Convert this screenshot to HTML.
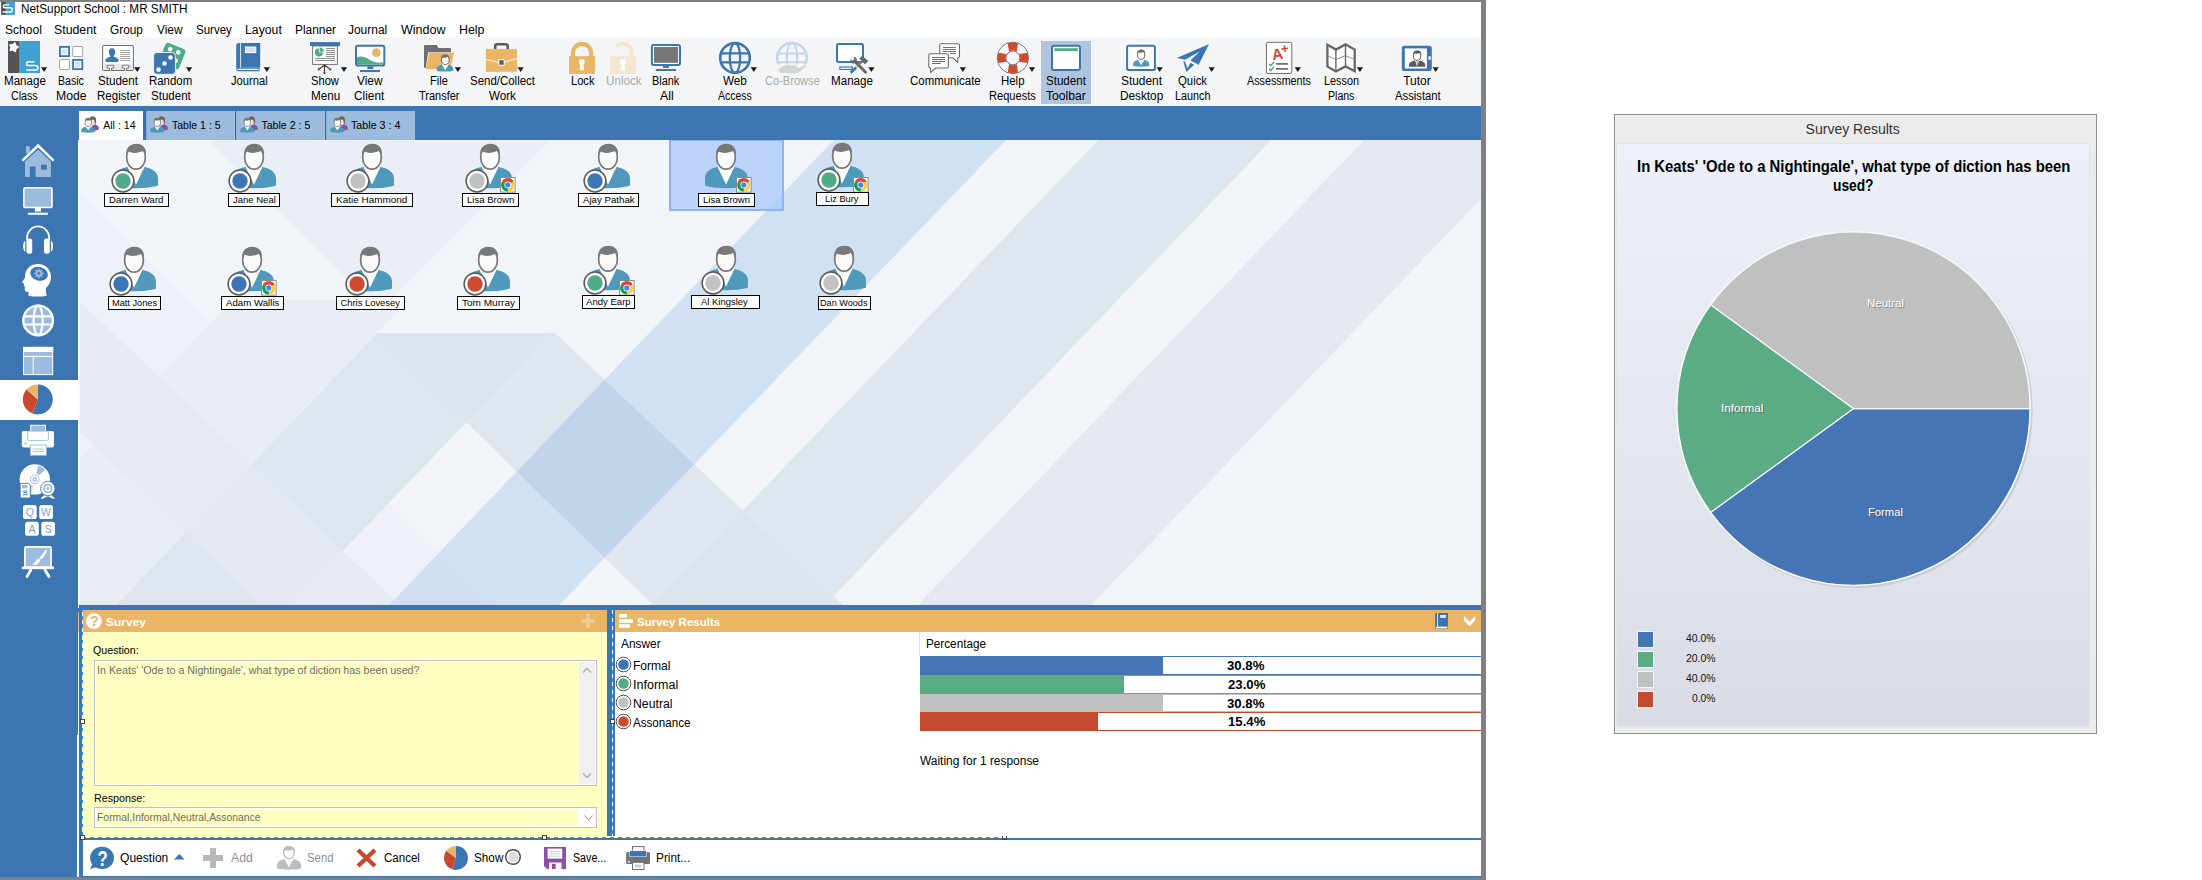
<!DOCTYPE html>
<html><head><meta charset="utf-8"><title>NetSupport School : MR SMITH</title>
<style>
html,body{margin:0;padding:0;background:#fff;}
body{width:2202px;height:880px;position:relative;overflow:hidden;font-family:"Liberation Sans", sans-serif;}
.a{position:absolute;}
.t{position:absolute;white-space:nowrap;transform-origin:0 50%;}
svg{position:absolute;overflow:visible;}

.blue{background:#3c76b2;}

</style></head><body>
<div class="a" style="left:0px;top:0px;width:1486px;height:880px;background:#808080;"></div>
<div class="a" style="left:0px;top:2px;width:1481px;height:36px;background:#ffffff;"></div>
<div class="a" style="left:0px;top:38px;width:1481px;height:68px;background:#f4f5f7;"></div>
<div class="a" style="left:0px;top:106px;width:1481px;height:34px;background:#3c76b2;"></div>
<div class="a" style="left:0px;top:140px;width:78px;height:737px;background:#3c76b2;"></div>
<div class="a" style="left:78px;top:605px;width:1403px;height:272px;background:#ffffff;"></div>
<div class="a" style="left:1041px;top:41px;width:50px;height:63px;background:#afc5df;"></div>
<div class="a" style="left:78.5px;top:110.5px;width:64.9px;height:29.5px;background:#ffffff;"></div>
<div class="a" style="left:145px;top:110.5px;width:1px;height:29.5px;background:#2f6aaa;"></div>
<div class="a" style="left:146px;top:110.5px;width:88.6px;height:29.5px;background:#9dbbdc;box-shadow:inset 1px 0 0 #8fb1d8, inset -1px 0 0 #a8c3e0;"></div>
<div class="a" style="left:235.4px;top:110.5px;width:1px;height:29.5px;background:#2f6aaa;"></div>
<div class="a" style="left:236.4px;top:110.5px;width:88.2px;height:29.5px;background:#9dbbdc;box-shadow:inset 1px 0 0 #8fb1d8, inset -1px 0 0 #a8c3e0;"></div>
<div class="a" style="left:325.4px;top:110.5px;width:1px;height:29.5px;background:#2f6aaa;"></div>
<div class="a" style="left:326.4px;top:110.5px;width:88.2px;height:29.5px;background:#9dbbdc;box-shadow:inset 1px 0 0 #8fb1d8, inset -1px 0 0 #a8c3e0;"></div>
<svg style="left:0;top:0" width="1481" height="106" viewBox="0 0 1481 106"><path d="M41 67.2 h6.2 l-3.1 4.9z" fill="#1a1a1a"/><path d="M134.1 67.2 h6.2 l-3.1 4.9z" fill="#1a1a1a"/><path d="M186 67.2 h6.2 l-3.1 4.9z" fill="#1a1a1a"/><path d="M263.7 67.2 h6.2 l-3.1 4.9z" fill="#1a1a1a"/><path d="M340.9 67.2 h6.2 l-3.1 4.9z" fill="#1a1a1a"/><path d="M454.8 67.2 h6.2 l-3.1 4.9z" fill="#1a1a1a"/><path d="M517.5 67.2 h6.2 l-3.1 4.9z" fill="#1a1a1a"/><path d="M750.7 67.2 h6.2 l-3.1 4.9z" fill="#1a1a1a"/><path d="M868.3 67.2 h6.2 l-3.1 4.9z" fill="#1a1a1a"/><path d="M959.7 67.2 h6.2 l-3.1 4.9z" fill="#1a1a1a"/><path d="M1028.9 67.2 h6.2 l-3.1 4.9z" fill="#1a1a1a"/><path d="M1156.6 67.2 h6.2 l-3.1 4.9z" fill="#1a1a1a"/><path d="M1208.6 67.2 h6.2 l-3.1 4.9z" fill="#1a1a1a"/><path d="M1294.7 67.2 h6.2 l-3.1 4.9z" fill="#1a1a1a"/><path d="M1356.8 67.2 h6.2 l-3.1 4.9z" fill="#1a1a1a"/><path d="M1432.6 67.2 h6.2 l-3.1 4.9z" fill="#1a1a1a"/><rect x="8" y="41" width="11.7" height="32" fill="#555353"/><rect x="19.6" y="41" width="20.4" height="32" fill="#41a0d4"/><polygon points="14.84,42.74 15.77,45.56 18.39,46.97 15.99,48.73 15.46,51.66 13.05,49.92 10.10,50.32 11.01,47.49 9.71,44.81 12.69,44.80" fill="#fff" stroke="#fff" stroke-width="1.2" stroke-linejoin="round"/><path d="M34 61.8 H28.4 A1.85 1.85 0 0 0 28.4 65.5 H35.6 A2.3 2.3 0 0 1 35.6 70.1 H26.8" fill="none" stroke="#fff" stroke-width="1.5" stroke-linecap="round"/><rect x="59.9" y="46.9" width="9.2" height="9.2" fill="#fff" stroke="#3c76b2" stroke-width="1.8"/><rect x="61.7" y="48.7" width="5.6" height="5.6" fill="#c9e4fb"/><rect x="72.7" y="46.5" width="10" height="10" rx="0.8" fill="#fff" stroke="#a3a3a3" stroke-width="1"/><rect x="59.5" y="59.5" width="10" height="10" rx="0.8" fill="#fff" stroke="#a3a3a3" stroke-width="1"/><rect x="73.1" y="59.9" width="9.2" height="9.2" fill="#fff" stroke="#3c76b2" stroke-width="1.8"/><rect x="74.9" y="61.7" width="5.6" height="5.6" fill="#c9e4fb"/><rect x="102.6" y="45.5" width="30.8" height="24.9" rx="1.7" fill="#fff" stroke="#6e6e6e" stroke-width="1.05"/><rect x="103.2" y="64.2" width="29.6" height="5.7" fill="#e6e6e6"/><path d="M109.4 70.5 V68 H107.1 V65.3 H113.7 V68 H111.6 V70.5 M124.6 70.5 V68 H122.3 V65.3 H128.8 V68 H126.6 V70.5" fill="#fff" stroke="#6e6e6e" stroke-width="0.95"/><path d="M112 48.2 C114.2 48.2 115.4 49.8 115.2 52 C115.1 54 114.4 55.2 113.6 56 C113.6 56.6 114 57 115 57.3 C117.4 58 118.6 58.8 118.7 60.6 C118.7 61.4 118.2 61.8 117 61.9 H107 C105.8 61.8 105.3 61.4 105.3 60.6 C105.4 58.8 106.6 58 109 57.3 C110 57 110.4 56.6 110.4 56 C109.6 55.2 108.9 54 108.8 52 C108.6 49.8 109.8 48.2 112 48.2Z" fill="#3c76b2"/><rect x="120" y="49.95" width="10" height="0.9" fill="#9a9a9a"/><rect x="120" y="52.05" width="10" height="0.9" fill="#9a9a9a"/><rect x="120" y="54.05" width="10" height="0.9" fill="#9a9a9a"/><rect x="120" y="56.05" width="10" height="0.9" fill="#9a9a9a"/><rect x="120" y="58.05" width="10" height="0.9" fill="#9a9a9a"/><rect x="120" y="60.05" width="10" height="0.9" fill="#9a9a9a"/><g transform="translate(166.4 42) rotate(22)"><rect x="0" y="0" width="21.5" height="21.5" rx="3" fill="#4fac86"/><circle cx="6.2" cy="5.2" r="2.3" fill="#fff"/><circle cx="14.9" cy="5.2" r="2.3" fill="#fff"/><circle cx="15.6" cy="13.9" r="2.3" fill="#fff"/></g><rect x="153.6" y="52.5" width="21.8" height="21.8" rx="3.2" fill="#3c76b2" stroke="#f4f5f7" stroke-width="0.9"/><circle cx="170.5" cy="57.5" r="2.3" fill="#fff"/><circle cx="164.5" cy="63.5" r="2.3" fill="#fff"/><circle cx="158.5" cy="69.6" r="2.3" fill="#fff"/><path d="M238.6 43 H260.2 V67.8 H238 Z" fill="#3c76b2"/><path d="M236.2 45.6 C236.2 44 237.4 43 239 43 H240.2 V67.8 H238.4 C237.2 67.8 236.2 68.6 236.2 69.6Z" fill="#3c76b2"/><rect x="240.2" y="43" width="0.9" height="24.8" fill="#f4f5f7"/><path d="M236.8 69.6 C236.8 68.8 237.6 68.2 238.6 68.2 H259 V70.6 H238 C237.2 70.6 236.8 70.2 236.8 69.6Z" fill="#fff" stroke="#3c76b2" stroke-width="1.1"/><rect x="245.4" y="47" width="10.4" height="5.6" fill="#d6e2ef" stroke="#fff" stroke-width="1"/><rect x="310" y="42.1" width="30" height="3.9" fill="#3c76b2"/><rect x="312.65" y="46" width="24.7" height="18.4" fill="#fff" stroke="#6e6e6e" stroke-width="0.95"/><path d="M318.9 52.6 V48.5 A4.1 4.1 0 1 0 323 52.6Z" fill="#4fac86"/><path d="M319.6 51.7 V47.4 A4.3 4.3 0 0 1 323.9 51.7Z" fill="#4fac86"/><rect x="326.1" y="48.05" width="8.9" height="0.9" fill="#808080"/><rect x="326.1" y="50.05" width="8.9" height="0.9" fill="#808080"/><rect x="326.1" y="52.05" width="8.9" height="0.9" fill="#808080"/><rect x="326.1" y="54.05" width="8.9" height="0.9" fill="#808080"/><rect x="326.1" y="56.05" width="8.9" height="0.9" fill="#808080"/><rect x="315.1" y="58.05" width="19.9" height="0.9" fill="#808080"/><rect x="315.1" y="60.05" width="19.9" height="0.9" fill="#808080"/><path d="M324.5 64.8 V72.8 M324.5 65 L318.8 69.2 M324.5 65 L330.2 69.2" stroke="#444" stroke-width="1.15" fill="none" stroke-linecap="round"/><circle cx="318.6" cy="69.4" r="1" fill="#444"/><circle cx="330.4" cy="69.4" r="1" fill="#444"/><circle cx="324.5" cy="72.8" r="1.1" fill="#444"/><rect x="356" y="45.8" width="28.3" height="19.8" rx="1.8" fill="#fff" stroke="#3c76b2" stroke-width="2"/><circle cx="376.4" cy="52.6" r="4.4" fill="#ebb566"/><path d="M357 57.4 C361 55.6 365 56.8 369 59.4 C373 62 378 63.4 383.3 62.2 V64.6 H357Z" fill="#4fac86"/><rect x="367.3" y="66.4" width="5.9" height="2.6" fill="#3c76b2"/><rect x="360" y="70" width="20" height="2.1" fill="#3c76b2"/><path d="M424 46.1 Q424 45.1 425 45.1 H436.8 L438.4 48.1 H450 Q451 48.1 451 49.1 V52.2 H428.1 L425.8 67.7 H424Z" fill="#6e6e6e"/><path d="M428.9 52.8 H454 L450.4 69 H425.9Z" fill="#ebb566"/><path d="M436.8 71 V68.6 C437 66 439.6 65.2 441.8 64.4 L445.2 69.6 L448.6 64.4 C450.8 65.2 452.9 66 453.1 68.6 V71 C448 71.8 442 71.8 436.8 71Z" fill="#4f9abc"/><path d="M441.8 64.2 L445.2 70 L448.6 64.2 L446.6 62.6 H443.8Z" fill="#fff"/><ellipse cx="445.3" cy="60" rx="3.9" ry="4.6" fill="#fafafa" stroke="#6e6e6e" stroke-width="1"/><path d="M441.2 59.4 C440.7 55.8 442.8 54.6 445.4 54.6 C448 54.6 450 56.2 449.4 59.2 C448.8 57.7 448.1 57.3 447.6 57.1 C445.8 58 443.5 58 442.4 57.3 C441.7 57.7 441.4 58.5 441.2 59.4Z" fill="#6e6e6e"/><path d="M495.2 49.2 V46.2 C495.2 44.9 496 44.3 497.2 44.3 H505.7 C506.9 44.3 507.7 44.9 507.7 46.2 V49.2" fill="none" stroke="#5c5c5c" stroke-width="2.6"/><rect x="485.8" y="48.9" width="31.2" height="22.9" fill="#ebb566"/><path d="M485.8 59.2 L501.5 63 L517 58.4" fill="none" stroke="#fbf0de" stroke-width="1.1"/><rect x="498.7" y="59.7" width="5.5" height="5.5" rx="0.6" fill="#5c5c5c" stroke="#fff" stroke-width="1.1"/><rect x="569" y="56.2" width="26" height="17.7" fill="#ebb566"/><path d="M572.95 57 V52.9 A9.05 9.05 0 0 1 591.05 52.9 V57" fill="none" stroke="#ebb566" stroke-width="4.1"/><circle cx="581.8" cy="61.9" r="2.95" fill="#fff"/><path d="M580.5 63 L579.5 70.2 H584.2 L583.1 63Z" fill="#fff"/><rect x="610" y="56.2" width="26" height="17.7" fill="#f5e6d0"/><path d="M615.97 46.84 A9.05 9.05 0 0 1 631.75 52.9 V57" fill="none" stroke="#f5e6d0" stroke-width="4.1"/><circle cx="622.8" cy="61.9" r="2.95" fill="#fff"/><path d="M621.5 63 L620.5 70.2 H625.2 L624.1 63Z" fill="#fff"/><rect x="651.9" y="44.9" width="28.1" height="20.1" rx="2" fill="#fff" stroke="#3c76b2" stroke-width="2"/><rect x="654" y="47" width="24.1" height="15.8" fill="#777"/><rect x="663" y="65.8" width="5.9" height="2.1" fill="#3c76b2"/><rect x="655.9" y="69" width="20.1" height="2" fill="#3c76b2"/><g fill="none" stroke="#3c76b2"><circle cx="735" cy="57.9" r="14.8" stroke-width="2.6"/><ellipse cx="735" cy="57.9" rx="5.2325" ry="14.8" stroke-width="2.2"/><path d="M720.888 53.4403 H749.112 M720.888 62.3597 H749.112" stroke-width="2.2"/></g><g><clipPath id="cbg"><rect x="770" y="40" width="44" height="24.2"/></clipPath><g clip-path="url(#cbg)"><g fill="none" stroke="#c3d5ea"><circle cx="792" cy="57.9" r="14.9" stroke-width="2.4"/><ellipse cx="792" cy="57.9" rx="5.2325" ry="14.9" stroke-width="2"/><path d="M777.783 53.4403 H806.217 M777.783 62.3597 H806.217" stroke-width="2"/></g></g></g><path d="M778.2 69.4 C781 66.6 785 65 789.4 65.2 L796 65.8 C798 66 798.2 67.8 796.4 68 L791 68.2 L799.4 68 L804.4 65 C805.8 64.2 807 65.2 805.8 66.4 L799.6 72 C797.8 73.2 796 73.5 793 73.4 L785 72.8 L780.6 73.4 Z" fill="#d5d5d5"/><rect x="837" y="44" width="26" height="18.1" rx="1.4" fill="#fff" stroke="#3c76b2" stroke-width="2"/><rect x="839.9" y="67" width="12.4" height="2.4" fill="#fff" stroke="#3c76b2" stroke-width="1.2"/><path d="M850.6 72.8 L856.2 67.4" stroke="#3c76b2" stroke-width="2.8" fill="none"/><path d="M854 60.6 L865.6 72.2" stroke="#666" stroke-width="2.8" fill="none" stroke-linecap="round"/><circle cx="853.6" cy="60.2" r="3.3" fill="#666"/><path d="M849.6 58.8 L852.8 55.6 L854.6 59.2 L852 60.8Z" fill="#f4f5f7"/><path d="M857 66.6 L861.6 61.8" stroke="#777" stroke-width="1.8" fill="none"/><path d="M859.2 58.6 L862.2 55.8 L868.2 61 L865 64.2 Z" fill="#666"/><path d="M941.2 43.7 H958 Q959.5 43.7 959.5 45.2 V56.3 Q959.5 57.8 958 57.8 H957.9 L957.6 62.4 L952.9 57.8 H941.2 Q939.7 57.8 939.7 56.3 V45.2 Q939.7 43.7 941.2 43.7Z" fill="#fff" stroke="#6a6a6a" stroke-width="1.05"/><rect x="943" y="47" width="13" height="1" fill="#d9503a"/><rect x="943" y="49" width="13" height="1" fill="#d9503a"/><rect x="943" y="51" width="13" height="1" fill="#d9503a"/><rect x="950" y="53" width="6" height="1" fill="#d9503a"/><path d="M930.3 53.8 H946.9 Q948.4 53.8 948.4 55.3 V66.5 Q948.4 68 946.9 68 H935.6 L930.6 72.4 L930.5 68 H930.3 Q928.8 68 928.8 66.5 V55.3 Q928.8 53.8 930.3 53.8Z" fill="#fff" stroke="#6a6a6a" stroke-width="1.05"/><rect x="932" y="57" width="13" height="1" fill="#3c76b2"/><rect x="932" y="59" width="13" height="1" fill="#3c76b2"/><rect x="932" y="61" width="13" height="1" fill="#3c76b2"/><rect x="932" y="63" width="8.8" height="1" fill="#3c76b2"/><circle cx="1012.9" cy="57.9" r="15.7" fill="#fff" stroke="#555" stroke-width="0.8"/><path d="M1027.42 52.76 A15.7 15.7 0 0 1 1027.42 63.04 L1019.01 61.72 A6.9 6.9 0 0 0 1019.01 54.08 Z" fill="#d04a31"/><path d="M1018.04 72.42 A15.7 15.7 0 0 1 1007.76 72.42 L1009.08 64.01 A6.9 6.9 0 0 0 1016.72 64.01 Z" fill="#d04a31"/><path d="M998.38 63.04 A15.7 15.7 0 0 1 998.38 52.76 L1006.79 54.08 A6.9 6.9 0 0 0 1006.79 61.72 Z" fill="#d04a31"/><path d="M1007.76 43.38 A15.7 15.7 0 0 1 1018.04 43.38 L1016.72 51.79 A6.9 6.9 0 0 0 1009.08 51.79 Z" fill="#d04a31"/><circle cx="1012.9" cy="57.9" r="6.9" fill="#f4f5f7" stroke="#555" stroke-width="0.8"/><rect x="1052" y="45.8" width="28" height="24.2" rx="2" fill="#fff" stroke="#3c76b2" stroke-width="2"/><rect x="1054.4" y="48.2" width="23.4" height="2.8" fill="#4fac86"/><rect x="1127.1" y="45.8" width="27.8" height="24.2" rx="1.8" fill="#fff" stroke="#3c76b2" stroke-width="2"/><path d="M1133.2 66 V64 C1133.4 61.4 1136 60.6 1138 59.8 L1141.2 64.8 L1144.4 59.8 C1146.4 60.6 1149 61.4 1149.2 64 V66 C1144 67 1138 67 1133.2 66Z" fill="#4f9abc"/><path d="M1138.2 59.6 L1141.2 65.2 L1144.2 59.6 L1142.6 58.4 H1139.8Z" fill="#fff"/><ellipse cx="1141.1" cy="55" rx="3.6" ry="4.4" fill="#fafafa" stroke="#6e6e6e" stroke-width="1"/><path d="M1137.2 54.4 C1136.8 50.8 1138.8 49.6 1141.3 49.6 C1143.9 49.6 1145.7 51.2 1145.1 54.2 C1144.5 52.7 1143.9 52.3 1143.4 52.1 C1141.7 53 1139.5 53 1138.4 52.3 C1137.7 52.7 1137.4 53.5 1137.2 54.4Z" fill="#6e6e6e"/><path d="M1176.8 58 L1209.1 43.9 L1200 51.2 L1185 59.8Z" fill="#3c76b2"/><path d="M1209.1 43.9 L1198.6 64.8 L1190.5 60.5 L1200.4 50.6Z" fill="#3c76b2"/><path d="M1183.2 61.2 L1186.4 71.9 L1194.1 64.8 L1190.5 62.8 L1187.5 68.2 L1184.8 61.2Z" fill="#3c76b2"/><rect x="1266.4" y="42.3" width="25.4" height="31.2" rx="1.6" fill="#fff" stroke="#6e6e6e" stroke-width="1"/><text transform="rotate(-9 1278 54)" x="1271.8" y="59.4" font-family='"Liberation Sans",sans-serif' font-weight="bold" font-size="15.4" fill="#d04a31">A</text><text transform="rotate(-9 1285 48)" x="1280.6" y="53" font-family='"Liberation Sans",sans-serif' font-weight="bold" font-size="13.5" fill="#d04a31">+</text><rect x="1276" y="63.05" width="12" height="1.7" fill="#6e6e6e"/><path d="M1269 63.9 L1270.8 65.5 L1274 61.9" fill="none" stroke="#3cab7c" stroke-width="1.3"/><rect x="1276" y="68.05" width="12" height="1.7" fill="#6e6e6e"/><path d="M1269 68.9 L1270.8 70.5 L1274 66.9" fill="none" stroke="#3cab7c" stroke-width="1.3"/><path d="M1327.4 44.8 L1335.9 49.6 L1345.5 44.4 L1354.7 49.6 V71.2 L1345.5 66.4 L1335.9 71.4 L1327.4 66.4Z" fill="#fff" stroke="#666" stroke-width="2.3" stroke-linejoin="miter"/><path d="M1335.9 49.6 V71.4 M1345.5 44.4 V66.4" stroke="#666" stroke-width="1.4" fill="none"/><path d="M1327.4 55.6 L1335.9 59.6 L1345.5 55.6 L1354.7 59.6" stroke="#858585" stroke-width="0.9" fill="none"/><rect x="1401.8" y="45.8" width="30" height="25.2" rx="2.6" fill="#3c76b2"/><rect x="1404.8" y="48.4" width="22.1" height="20.1" fill="#fff"/><ellipse cx="1429.6" cy="58" rx="1.3" ry="2" fill="#fff"/><path d="M1409 66.8 V64.6 C1409.3 62 1412 61.2 1414.2 60.4 L1417.1 62.4 L1420 60.4 C1422.2 61.2 1425 62 1425.2 64.6 V66.8Z" fill="#5a5a5a"/><path d="M1415.2 60.2 L1417.1 66.6 L1419 60.2Z" fill="#fff"/><path d="M1416.4 61.2 L1417.1 66.6 L1417.8 61.2Z" fill="#e8733a"/><ellipse cx="1417.1" cy="55.9" rx="3.7" ry="4.5" fill="#fafafa" stroke="#5a5a5a" stroke-width="1"/><path d="M1413.1 55.3 C1412.6 51.8 1414.8 50.6 1417.3 50.6 C1419.9 50.6 1421.8 52.2 1421.2 55.1 C1420.6 53.6 1419.9 53.2 1419.5 53 C1417.8 53.9 1415.4 53.9 1414.3 53.2 C1413.6 53.6 1413.3 54.4 1413.1 55.3Z" fill="#5a5a5a"/></svg>
<svg style="left:0;top:0" width="20" height="18" viewBox="0 0 20 18"><rect x="1.1" y="2" width="4.8" height="12.9" fill="#555353"/><rect x="5.9" y="2" width="9" height="12.9" fill="#41a0d4"/><path d="M8.6 4.9 H4.7 A1.4 1.4 0 0 0 4.7 7.7 H10.2 A2.15 2.15 0 0 1 10.2 12 H3.2" fill="none" stroke="#fff" stroke-width="1.4" stroke-linecap="round"/></svg>
<svg style="left:81px;top:116px" width="19" height="18" viewBox="0 0 19 18"><path d="M11 14.2 V10 L13.4 8.6 C15.8 9 17.6 10 17.8 11.8 V13.4 C16.4 14.2 13 14.4 11 14.2Z" fill="#8c4fa8"/><ellipse cx="11.6" cy="5" rx="2.9" ry="3.8" fill="#f1e2d4"/><path d="M8.4 5.4 C8 2 9.6 0.3 11.8 0.3 C14.4 0.3 15.4 2.4 15 5.6 C14.9 7.6 14.6 8.6 14 9.4 C14 7 13.6 4.6 12.6 3.4 C11 3.8 9.4 4.4 8.4 5.4Z" fill="#6e625e"/><path d="M0.2 16 V14 C0.5 12 2.6 11.4 4.6 10.8 L7.3 13.6 L10 10.8 C12 11.4 13.9 12 14.2 14 V16 C9.6 16.9 4.6 16.9 0.2 16Z" fill="#4f9abc"/><path d="M4.8 10.6 L7.3 14.4 L9.8 10.6 L8.4 9.4 H6.2Z" fill="#fff"/><ellipse cx="7.3" cy="6.6" rx="3.2" ry="4.1" fill="#fafafa" stroke="#777" stroke-width="0.8"/><path d="M3.9 6.2 C3.5 2.9 5.2 1.8 7.4 1.8 C9.6 1.8 11.2 3.2 10.7 6 C10.2 4.7 9.6 4.3 9.2 4.1 C7.8 4.9 5.9 4.9 5 4.3 C4.4 4.7 4.1 5.4 3.9 6.2Z" fill="#777"/></svg>
<svg style="left:149.8px;top:116px" width="19" height="18" viewBox="0 0 19 18"><path d="M11 14.2 V10 L13.4 8.6 C15.8 9 17.6 10 17.8 11.8 V13.4 C16.4 14.2 13 14.4 11 14.2Z" fill="#8c4fa8"/><ellipse cx="11.6" cy="5" rx="2.9" ry="3.8" fill="#f1e2d4"/><path d="M8.4 5.4 C8 2 9.6 0.3 11.8 0.3 C14.4 0.3 15.4 2.4 15 5.6 C14.9 7.6 14.6 8.6 14 9.4 C14 7 13.6 4.6 12.6 3.4 C11 3.8 9.4 4.4 8.4 5.4Z" fill="#6e625e"/><path d="M0.2 16 V14 C0.5 12 2.6 11.4 4.6 10.8 L7.3 13.6 L10 10.8 C12 11.4 13.9 12 14.2 14 V16 C9.6 16.9 4.6 16.9 0.2 16Z" fill="#4f9abc"/><path d="M4.8 10.6 L7.3 14.4 L9.8 10.6 L8.4 9.4 H6.2Z" fill="#fff"/><ellipse cx="7.3" cy="6.6" rx="3.2" ry="4.1" fill="#fafafa" stroke="#777" stroke-width="0.8"/><path d="M3.9 6.2 C3.5 2.9 5.2 1.8 7.4 1.8 C9.6 1.8 11.2 3.2 10.7 6 C10.2 4.7 9.6 4.3 9.2 4.1 C7.8 4.9 5.9 4.9 5 4.3 C4.4 4.7 4.1 5.4 3.9 6.2Z" fill="#777"/></svg>
<svg style="left:240px;top:116px" width="19" height="18" viewBox="0 0 19 18"><path d="M11 14.2 V10 L13.4 8.6 C15.8 9 17.6 10 17.8 11.8 V13.4 C16.4 14.2 13 14.4 11 14.2Z" fill="#8c4fa8"/><ellipse cx="11.6" cy="5" rx="2.9" ry="3.8" fill="#f1e2d4"/><path d="M8.4 5.4 C8 2 9.6 0.3 11.8 0.3 C14.4 0.3 15.4 2.4 15 5.6 C14.9 7.6 14.6 8.6 14 9.4 C14 7 13.6 4.6 12.6 3.4 C11 3.8 9.4 4.4 8.4 5.4Z" fill="#6e625e"/><path d="M0.2 16 V14 C0.5 12 2.6 11.4 4.6 10.8 L7.3 13.6 L10 10.8 C12 11.4 13.9 12 14.2 14 V16 C9.6 16.9 4.6 16.9 0.2 16Z" fill="#4f9abc"/><path d="M4.8 10.6 L7.3 14.4 L9.8 10.6 L8.4 9.4 H6.2Z" fill="#fff"/><ellipse cx="7.3" cy="6.6" rx="3.2" ry="4.1" fill="#fafafa" stroke="#777" stroke-width="0.8"/><path d="M3.9 6.2 C3.5 2.9 5.2 1.8 7.4 1.8 C9.6 1.8 11.2 3.2 10.7 6 C10.2 4.7 9.6 4.3 9.2 4.1 C7.8 4.9 5.9 4.9 5 4.3 C4.4 4.7 4.1 5.4 3.9 6.2Z" fill="#777"/></svg>
<svg style="left:330px;top:116px" width="19" height="18" viewBox="0 0 19 18"><path d="M11 14.2 V10 L13.4 8.6 C15.8 9 17.6 10 17.8 11.8 V13.4 C16.4 14.2 13 14.4 11 14.2Z" fill="#8c4fa8"/><ellipse cx="11.6" cy="5" rx="2.9" ry="3.8" fill="#f1e2d4"/><path d="M8.4 5.4 C8 2 9.6 0.3 11.8 0.3 C14.4 0.3 15.4 2.4 15 5.6 C14.9 7.6 14.6 8.6 14 9.4 C14 7 13.6 4.6 12.6 3.4 C11 3.8 9.4 4.4 8.4 5.4Z" fill="#6e625e"/><path d="M0.2 16 V14 C0.5 12 2.6 11.4 4.6 10.8 L7.3 13.6 L10 10.8 C12 11.4 13.9 12 14.2 14 V16 C9.6 16.9 4.6 16.9 0.2 16Z" fill="#4f9abc"/><path d="M4.8 10.6 L7.3 14.4 L9.8 10.6 L8.4 9.4 H6.2Z" fill="#fff"/><ellipse cx="7.3" cy="6.6" rx="3.2" ry="4.1" fill="#fafafa" stroke="#777" stroke-width="0.8"/><path d="M3.9 6.2 C3.5 2.9 5.2 1.8 7.4 1.8 C9.6 1.8 11.2 3.2 10.7 6 C10.2 4.7 9.6 4.3 9.2 4.1 C7.8 4.9 5.9 4.9 5 4.3 C4.4 4.7 4.1 5.4 3.9 6.2Z" fill="#777"/></svg>
<svg style="left:0;top:0" width="78" height="880" viewBox="0 0 78 880"><rect x="0" y="380" width="78" height="40" fill="#fff"/><rect x="25.9" y="146.2" width="3.9" height="7" fill="#9dbbdc"/><path d="M25 161.6 L38.1 149.6 L50.9 161.6 V177 H25Z" fill="#9dbbdc"/><rect x="29.8" y="166.5" width="5.8" height="10.5" fill="#3c76b2"/><rect x="41" y="164.7" width="5.8" height="5" fill="#3c76b2"/><path d="M22.4 160.6 L38.1 145.6 L53.6 160.6" fill="none" stroke="#fff" stroke-width="2.6" stroke-linejoin="miter"/><rect x="23.8" y="187.7" width="28.2" height="19.8" rx="1.8" fill="#9dbbdc" stroke="#fff" stroke-width="1.6"/><rect x="34.9" y="208" width="6.1" height="3.6" fill="#fff"/><rect x="27.9" y="212.7" width="20.1" height="2.1" fill="#fff"/><path d="M27 240 V238 A11.1 11.6 0 0 1 49.2 238 V240" fill="none" stroke="#fff" stroke-width="1.7"/><rect x="26.4" y="238.4" width="5.8" height="15.4" rx="2.4" fill="#fff"/><path d="M25.2 240.4 C22.4 242 22.4 250 25.2 251.8Z" fill="#fff"/><rect x="44" y="238.4" width="5.8" height="15.4" rx="2.4" fill="#fff"/><path d="M51 240.4 C53.8 242 53.8 250 51 251.8Z" fill="#fff"/><path d="M38 264 C46 264 51 270 51 277 C51 282 48.6 285.4 46 288 C45.6 290.4 46 293.4 46.8 295.4 C42 297 33 297 28.4 295.4 L28.6 291.8 C26.6 292 24.8 291.6 24.8 289.4 L24.8 286.6 L23.6 285.6 L24.4 283.8 L22 282.6 L25 277.4 C24.6 270 29.6 264 38 264Z" fill="#fff"/><ellipse cx="39.1" cy="273.8" rx="9" ry="6.8" transform="rotate(14 39.1 273.8)" fill="#3c76b2"/><g transform="translate(38.9 273.4) scale(1.15)" fill="none" stroke="#9dbbdc"><circle r="2.3" stroke-width="1.4"/><path d="M0 -4.4 V4.4 M-4.4 0 H4.4 M-3.1 -3.1 L3.1 3.1 M-3.1 3.1 L3.1 -3.1" stroke-width="1.1"/></g><circle cx="38.9" cy="273.4" r="1.3" fill="#3c76b2"/><circle cx="38.1" cy="320.4" r="15" fill="#9dbbdc"/><g fill="none" stroke="#fff" stroke-width="2.2"><circle cx="38.1" cy="320.4" r="14.8" stroke-width="2.4"/><ellipse cx="38.1" cy="320.4" rx="4.5" ry="14.8"/><path d="M23.8 316.3 H52.4 M23.8 324.5 H52.4"/></g><rect x="23.5" y="347.4" width="29.2" height="27.2" fill="#9dbbdc" stroke="#fff" stroke-width="1"/><rect x="23" y="346.9" width="30.2" height="5.1" fill="#fff"/><rect x="23" y="355.9" width="30.2" height="1" fill="#fff"/><rect x="32.7" y="356" width="1" height="19" fill="#fff"/><path d="M37.8 399.4 L37.80 384.40 A15 15 0 1 1 32.67 413.50 Z" fill="#3c76b2"/><path d="M37.8 399.4 L32.67 413.50 A15 15 0 0 1 26.48 389.56 Z" fill="#c9482f"/><path d="M37.8 399.4 L26.48 389.56 A15 15 0 0 1 37.80 384.40 Z" fill="#ebb566"/><rect x="30.7" y="425.3" width="14.8" height="8" fill="#9dbbdc" stroke="#fff" stroke-width="1"/><rect x="21.8" y="431" width="32.2" height="16.4" rx="1.8" fill="#fff"/><path d="M27.6 431.2 H48.4 V438.6 Q48.4 440.6 46.4 440.6 H29.6 Q27.6 440.6 27.6 438.6Z" fill="#fff" stroke="#9dbbdc" stroke-width="0.9"/><rect x="30.3" y="445" width="16" height="10.3" fill="#fff" stroke="#9dbbdc" stroke-width="0.9"/><rect x="32.6" y="448.6" width="11.4" height="0.9" fill="#9dbbdc"/><rect x="32.6" y="451.2" width="11.4" height="0.9" fill="#9dbbdc"/><rect x="24.4" y="443" width="2.6" height="1.2" fill="#9dbbdc"/><circle cx="34.8" cy="479.4" r="15.2" fill="#fff"/><path d="M36.35 473.19 L38.28 465.43 A14.4 14.4 0 0 1 45.16 469.40 L39.40 474.95 A6.4 6.4 0 0 0 36.35 473.19 Z" fill="#9dbbdc"/><path d="M33.25 485.61 L31.32 493.37 A14.4 14.4 0 0 1 24.44 489.40 L30.20 483.85 A6.4 6.4 0 0 0 33.25 485.61 Z" fill="#cbdaed"/><circle cx="34.8" cy="479.4" r="4.4" fill="none" stroke="#9dbbdc" stroke-width="1"/><circle cx="34.8" cy="479.4" r="2.4" fill="#9dbbdc"/><rect x="33.9" y="478.5" width="1.8" height="1.8" transform="rotate(45 34.8 479.4)" fill="#fff"/><path d="M20.2 483.4 H28.4 L30.4 485.4 V498 H20.2Z" fill="#fff" stroke="#3c76b2" stroke-width="0.9"/><rect x="22" y="485" width="5.6" height="3.4" fill="#9dbbdc"/><text transform="rotate(-90 26.6 496.6)" x="26.6" y="496.6" font-family='"Liberation Sans",sans-serif' font-size="6" font-weight="bold" fill="#3c76b2">16</text><path d="M40.8 498.3 L45.4 494 H50.2 L54.8 498.3 L53.6 499 L47.8 496.2 L42 499Z" fill="#fff"/><circle cx="47.8" cy="488.5" r="7.2" fill="#fff" stroke="#3c76b2" stroke-width="0.9"/><circle cx="47.8" cy="488.5" r="4.8" fill="#9dbbdc"/><circle cx="47.8" cy="488.5" r="2.9" fill="#fff"/><circle cx="47.8" cy="488.5" r="1.5" fill="#9dbbdc"/><rect x="23" y="505" width="13.7" height="14" rx="2.6" fill="#fff"/><text x="29.85" y="515.8" text-anchor="middle" font-family='"Liberation Sans",sans-serif' font-size="10.5" fill="#7fa5d1">Q</text><rect x="39.2" y="505" width="13.7" height="14" rx="2.6" fill="#fff"/><text x="46.05" y="515.8" text-anchor="middle" font-family='"Liberation Sans",sans-serif' font-size="10.5" fill="#7fa5d1">W</text><rect x="25.1" y="521.8" width="13.7" height="14" rx="2.6" fill="#fff"/><text x="31.95" y="532.6" text-anchor="middle" font-family='"Liberation Sans",sans-serif' font-size="10.5" fill="#7fa5d1">A</text><rect x="41.3" y="521.8" width="13.7" height="14" rx="2.6" fill="#fff"/><text x="48.15" y="532.6" text-anchor="middle" font-family='"Liberation Sans",sans-serif' font-size="10.5" fill="#7fa5d1">S</text><path d="M24.9 567 V548.4 Q24.9 546.8 26.5 546.8 H49.5 Q51.1 546.8 51.1 548.4 V567Z" fill="#9dbbdc" stroke="#fff" stroke-width="1.7"/><rect x="21.8" y="566.6" width="32.2" height="2.6" fill="#fff"/><path d="M30.8 570 L27 576.6 M45 570 L49 576.6" stroke="#fff" stroke-width="2.8" stroke-linecap="round"/><path d="M46.6 549.2 C47.4 552 44.4 557 41 559.6 L39.4 558 C42 554.6 44.6 550.6 46.6 549.2Z" fill="#fff"/><path d="M38.8 558.6 L40.4 560.2 C39.4 563 36 565.4 32.2 565 C35 563.6 35.4 560 38.8 558.6Z" fill="#fff"/></svg>
<svg class="a" style="left:0;top:0" width="1481" height="605" viewBox="0 0 1481 605"><defs><clipPath id="mc"><rect x="78" y="140" width="1403" height="465"/></clipPath></defs><g clip-path="url(#mc)"><rect x="78" y="140" width="1403" height="465" fill="#f1f4f9"/><polygon points="78,190 78,470 300,605 490,605" fill="#eef1f7"/><polygon points="116,605 291,605 552.12,333 377.12,333" fill="#dfe5ef"/><polygon points="-60,605 116,605 408.8,300 232.8,300" fill="#e8edf4"/><polygon points="652,605 825,605 1271.4,140 1098.4,140" fill="#e0e6f0"/><polygon points="918,605 1091,605 1537.4,140 1364.4,140" fill="#e3e8f1"/><polygon points="375,333 555,333 843,605 653,605" fill="#d9e1ec" fill-opacity="0.75"/><polygon points="78,300 78,430 260,605 400,605" fill="#e3e9f1" fill-opacity="0.8"/><polygon points="389,605 559,605 1006,140 834,140" fill="#cddef1" fill-opacity="0.92"/><clipPath id="bs"><polygon points="389,605 559,605 1006,140 834,140"/></clipPath><g clip-path="url(#bs)"><polygon points="375,333 555,333 843,605 653,605" fill="#bed2ea" fill-opacity="0.85"/></g><polygon points="208,140 551,140 379.5,311.5" fill="#e9eef4" fill-opacity="0.9"/></g></svg>
<div class="a" style="left:78px;top:140px;width:2px;height:465px;background:#f7f9fc;"></div>
<div class="a" style="left:669.1px;top:140px;width:114.7px;height:70.7px;background:rgba(170,200,250,0.75);border:2px solid rgba(135,176,250,0.9);border-top-width:1px;box-sizing:border-box;"></div>
<svg style="left:106px;top:142px" width="60" height="50" viewBox="0 0 60 50"><path d="M19.5 25.5 C14 27 9.5 29.5 9 36 L9 43.5 C14 45.6 24 46.2 30 46.2 C36 46.2 47 45.6 52 43.5 L52 36 C51.5 29.5 46 27 40.5 25.5 L38.5 24.8 L30 42 L21.5 24.8 Z" fill="#4f9abc"/><path d="M21.5 24.6 L30 42.5 L38.5 24.6 L34 21 L26 21 Z" fill="#fbfbfb"/><ellipse cx="30" cy="15.2" rx="9.4" ry="12" fill="#fafafa" stroke="#787878" stroke-width="1.7"/><path d="M20.2 13.5 C19.5 5 25 1.8 30.5 1.8 C36.5 1.8 41 6 39.8 13.2 C39.3 10.8 38.3 9.6 37.2 8.8 C33 11.2 26 11.6 22.8 9.6 C21.3 10.4 20.6 11.8 20.2 13.5 Z" fill="#787878"/></svg><svg style="left:109.8px;top:168.2px" width="26" height="26" viewBox="0 0 26 26"><circle cx="13" cy="13" r="10.9" fill="#fff" stroke="#595959" stroke-width="1.5"/><circle cx="13" cy="13" r="7.7" fill="#4fac86"/></svg>
<div class="a" style="left:104px;top:193px;width:65px;height:14px;background:#fff;border:1px solid #000;box-sizing:border-box;"></div>
<svg style="left:223.5px;top:142px" width="60" height="50" viewBox="0 0 60 50"><path d="M19.5 25.5 C14 27 9.5 29.5 9 36 L9 43.5 C14 45.6 24 46.2 30 46.2 C36 46.2 47 45.6 52 43.5 L52 36 C51.5 29.5 46 27 40.5 25.5 L38.5 24.8 L30 42 L21.5 24.8 Z" fill="#4f9abc"/><path d="M21.5 24.6 L30 42.5 L38.5 24.6 L34 21 L26 21 Z" fill="#fbfbfb"/><ellipse cx="30" cy="15.2" rx="9.4" ry="12" fill="#fafafa" stroke="#787878" stroke-width="1.7"/><path d="M20.2 13.5 C19.5 5 25 1.8 30.5 1.8 C36.5 1.8 41 6 39.8 13.2 C39.3 10.8 38.3 9.6 37.2 8.8 C33 11.2 26 11.6 22.8 9.6 C21.3 10.4 20.6 11.8 20.2 13.5 Z" fill="#787878"/></svg><svg style="left:227.3px;top:168.2px" width="26" height="26" viewBox="0 0 26 26"><circle cx="13" cy="13" r="10.9" fill="#fff" stroke="#595959" stroke-width="1.5"/><circle cx="13" cy="13" r="7.7" fill="#3d76b5"/></svg>
<div class="a" style="left:228px;top:193px;width:52px;height:14px;background:#fff;border:1px solid #000;box-sizing:border-box;"></div>
<svg style="left:341.5px;top:142px" width="60" height="50" viewBox="0 0 60 50"><path d="M19.5 25.5 C14 27 9.5 29.5 9 36 L9 43.5 C14 45.6 24 46.2 30 46.2 C36 46.2 47 45.6 52 43.5 L52 36 C51.5 29.5 46 27 40.5 25.5 L38.5 24.8 L30 42 L21.5 24.8 Z" fill="#4f9abc"/><path d="M21.5 24.6 L30 42.5 L38.5 24.6 L34 21 L26 21 Z" fill="#fbfbfb"/><ellipse cx="30" cy="15.2" rx="9.4" ry="12" fill="#fafafa" stroke="#787878" stroke-width="1.7"/><path d="M20.2 13.5 C19.5 5 25 1.8 30.5 1.8 C36.5 1.8 41 6 39.8 13.2 C39.3 10.8 38.3 9.6 37.2 8.8 C33 11.2 26 11.6 22.8 9.6 C21.3 10.4 20.6 11.8 20.2 13.5 Z" fill="#787878"/></svg><svg style="left:345.3px;top:168.2px" width="26" height="26" viewBox="0 0 26 26"><circle cx="13" cy="13" r="10.9" fill="#fff" stroke="#595959" stroke-width="1.5"/><circle cx="13" cy="13" r="7.7" fill="#c1c1c1"/></svg>
<div class="a" style="left:331px;top:193px;width:82px;height:14px;background:#fff;border:1px solid #000;box-sizing:border-box;"></div>
<svg style="left:460px;top:142px" width="60" height="50" viewBox="0 0 60 50"><path d="M19.5 25.5 C14 27 9.5 29.5 9 36 L9 43.5 C14 45.6 24 46.2 30 46.2 C36 46.2 47 45.6 52 43.5 L52 36 C51.5 29.5 46 27 40.5 25.5 L38.5 24.8 L30 42 L21.5 24.8 Z" fill="#4f9abc"/><path d="M21.5 24.6 L30 42.5 L38.5 24.6 L34 21 L26 21 Z" fill="#fbfbfb"/><ellipse cx="30" cy="15.2" rx="9.4" ry="12" fill="#fafafa" stroke="#787878" stroke-width="1.7"/><path d="M20.2 13.5 C19.5 5 25 1.8 30.5 1.8 C36.5 1.8 41 6 39.8 13.2 C39.3 10.8 38.3 9.6 37.2 8.8 C33 11.2 26 11.6 22.8 9.6 C21.3 10.4 20.6 11.8 20.2 13.5 Z" fill="#787878"/></svg><svg style="left:463.8px;top:168.2px" width="26" height="26" viewBox="0 0 26 26"><circle cx="13" cy="13" r="10.9" fill="#fff" stroke="#595959" stroke-width="1.5"/><circle cx="13" cy="13" r="7.7" fill="#c1c1c1"/></svg><svg style="left:500.4px;top:177.1px" width="16" height="16" viewBox="0 0 16 16"><rect x="0.5" y="0.5" width="14.6" height="14.6" fill="#fff" stroke="#8c8c8c" stroke-width="1"/><g transform="translate(7.8 7.9)"><path d="M0 0 L-5.72 -3.3 A6.6 6.6 0 0 1 5.72 -3.3 Z" fill="#db4437"/><path d="M0 0 L5.72 -3.3 A6.6 6.6 0 0 1 0 6.6 Z" fill="#ffcd40"/><path d="M0 0 L0 6.6 A6.6 6.6 0 0 1 -5.72 -3.3 Z" fill="#0f9d58"/><path d="M-5.72 -3.3 A6.6 6.6 0 0 1 5.72 -3.3 L0 -3.3 Z" fill="#db4437"/><circle r="3.4" fill="#fff"/><circle r="2.6" fill="#4285f4"/></g></svg>
<div class="a" style="left:462px;top:193px;width:56.6px;height:14px;background:#fff;border:1px solid #000;box-sizing:border-box;"></div>
<svg style="left:578px;top:142px" width="60" height="50" viewBox="0 0 60 50"><path d="M19.5 25.5 C14 27 9.5 29.5 9 36 L9 43.5 C14 45.6 24 46.2 30 46.2 C36 46.2 47 45.6 52 43.5 L52 36 C51.5 29.5 46 27 40.5 25.5 L38.5 24.8 L30 42 L21.5 24.8 Z" fill="#4f9abc"/><path d="M21.5 24.6 L30 42.5 L38.5 24.6 L34 21 L26 21 Z" fill="#fbfbfb"/><ellipse cx="30" cy="15.2" rx="9.4" ry="12" fill="#fafafa" stroke="#787878" stroke-width="1.7"/><path d="M20.2 13.5 C19.5 5 25 1.8 30.5 1.8 C36.5 1.8 41 6 39.8 13.2 C39.3 10.8 38.3 9.6 37.2 8.8 C33 11.2 26 11.6 22.8 9.6 C21.3 10.4 20.6 11.8 20.2 13.5 Z" fill="#787878"/></svg><svg style="left:581.8px;top:168.2px" width="26" height="26" viewBox="0 0 26 26"><circle cx="13" cy="13" r="10.9" fill="#fff" stroke="#595959" stroke-width="1.5"/><circle cx="13" cy="13" r="7.7" fill="#3d76b5"/></svg>
<div class="a" style="left:578px;top:193px;width:60.7px;height:14px;background:#fff;border:1px solid #000;box-sizing:border-box;"></div>
<svg style="left:696px;top:142px" width="60" height="50" viewBox="0 0 60 50"><path d="M19.5 25.5 C14 27 9.5 29.5 9 36 L9 43.5 C14 45.6 24 46.2 30 46.2 C36 46.2 47 45.6 52 43.5 L52 36 C51.5 29.5 46 27 40.5 25.5 L38.5 24.8 L30 42 L21.5 24.8 Z" fill="#4f9abc"/><path d="M21.5 24.6 L30 42.5 L38.5 24.6 L34 21 L26 21 Z" fill="#fbfbfb"/><ellipse cx="30" cy="15.2" rx="9.4" ry="12" fill="#fafafa" stroke="#787878" stroke-width="1.7"/><path d="M20.2 13.5 C19.5 5 25 1.8 30.5 1.8 C36.5 1.8 41 6 39.8 13.2 C39.3 10.8 38.3 9.6 37.2 8.8 C33 11.2 26 11.6 22.8 9.6 C21.3 10.4 20.6 11.8 20.2 13.5 Z" fill="#787878"/></svg><svg style="left:736.2px;top:177.1px" width="16" height="16" viewBox="0 0 16 16"><rect x="0.5" y="0.5" width="14.6" height="14.6" fill="#fff" stroke="#8c8c8c" stroke-width="1"/><g transform="translate(7.8 7.9)"><path d="M0 0 L-5.72 -3.3 A6.6 6.6 0 0 1 5.72 -3.3 Z" fill="#db4437"/><path d="M0 0 L5.72 -3.3 A6.6 6.6 0 0 1 0 6.6 Z" fill="#ffcd40"/><path d="M0 0 L0 6.6 A6.6 6.6 0 0 1 -5.72 -3.3 Z" fill="#0f9d58"/><path d="M-5.72 -3.3 A6.6 6.6 0 0 1 5.72 -3.3 L0 -3.3 Z" fill="#db4437"/><circle r="3.4" fill="#fff"/><circle r="2.6" fill="#4285f4"/></g></svg>
<div class="a" style="left:698.3px;top:193px;width:56.7px;height:14px;background:#fff;border:1px solid #000;box-sizing:border-box;"></div>
<svg style="left:812px;top:141px" width="60" height="50" viewBox="0 0 60 50"><path d="M19.5 25.5 C14 27 9.5 29.5 9 36 L9 43.5 C14 45.6 24 46.2 30 46.2 C36 46.2 47 45.6 52 43.5 L52 36 C51.5 29.5 46 27 40.5 25.5 L38.5 24.8 L30 42 L21.5 24.8 Z" fill="#4f9abc"/><path d="M21.5 24.6 L30 42.5 L38.5 24.6 L34 21 L26 21 Z" fill="#fbfbfb"/><ellipse cx="30" cy="15.2" rx="9.4" ry="12" fill="#fafafa" stroke="#787878" stroke-width="1.7"/><path d="M20.2 13.5 C19.5 5 25 1.8 30.5 1.8 C36.5 1.8 41 6 39.8 13.2 C39.3 10.8 38.3 9.6 37.2 8.8 C33 11.2 26 11.6 22.8 9.6 C21.3 10.4 20.6 11.8 20.2 13.5 Z" fill="#787878"/></svg><svg style="left:815.8px;top:167.2px" width="26" height="26" viewBox="0 0 26 26"><circle cx="13" cy="13" r="10.9" fill="#fff" stroke="#595959" stroke-width="1.5"/><circle cx="13" cy="13" r="7.7" fill="#4fac86"/></svg><svg style="left:853.2px;top:177.1px" width="16" height="16" viewBox="0 0 16 16"><rect x="0.5" y="0.5" width="14.6" height="14.6" fill="#fff" stroke="#8c8c8c" stroke-width="1"/><g transform="translate(7.8 7.9)"><path d="M0 0 L-5.72 -3.3 A6.6 6.6 0 0 1 5.72 -3.3 Z" fill="#db4437"/><path d="M0 0 L5.72 -3.3 A6.6 6.6 0 0 1 0 6.6 Z" fill="#ffcd40"/><path d="M0 0 L0 6.6 A6.6 6.6 0 0 1 -5.72 -3.3 Z" fill="#0f9d58"/><path d="M-5.72 -3.3 A6.6 6.6 0 0 1 5.72 -3.3 L0 -3.3 Z" fill="#db4437"/><circle r="3.4" fill="#fff"/><circle r="2.6" fill="#4285f4"/></g></svg>
<div class="a" style="left:816px;top:192px;width:52.7px;height:14px;background:#fff;border:1px solid #000;box-sizing:border-box;"></div>
<svg style="left:104px;top:245px" width="60" height="50" viewBox="0 0 60 50"><path d="M19.5 25.5 C14 27 9.5 29.5 9 36 L9 43.5 C14 45.6 24 46.2 30 46.2 C36 46.2 47 45.6 52 43.5 L52 36 C51.5 29.5 46 27 40.5 25.5 L38.5 24.8 L30 42 L21.5 24.8 Z" fill="#4f9abc"/><path d="M21.5 24.6 L30 42.5 L38.5 24.6 L34 21 L26 21 Z" fill="#fbfbfb"/><ellipse cx="30" cy="15.2" rx="9.4" ry="12" fill="#fafafa" stroke="#787878" stroke-width="1.7"/><path d="M20.2 13.5 C19.5 5 25 1.8 30.5 1.8 C36.5 1.8 41 6 39.8 13.2 C39.3 10.8 38.3 9.6 37.2 8.8 C33 11.2 26 11.6 22.8 9.6 C21.3 10.4 20.6 11.8 20.2 13.5 Z" fill="#787878"/></svg><svg style="left:107.8px;top:271.2px" width="26" height="26" viewBox="0 0 26 26"><circle cx="13" cy="13" r="10.9" fill="#fff" stroke="#595959" stroke-width="1.5"/><circle cx="13" cy="13" r="7.7" fill="#3d76b5"/></svg>
<div class="a" style="left:108px;top:296px;width:53px;height:14px;background:#fff;border:1px solid #000;box-sizing:border-box;"></div>
<svg style="left:222px;top:245px" width="60" height="50" viewBox="0 0 60 50"><path d="M19.5 25.5 C14 27 9.5 29.5 9 36 L9 43.5 C14 45.6 24 46.2 30 46.2 C36 46.2 47 45.6 52 43.5 L52 36 C51.5 29.5 46 27 40.5 25.5 L38.5 24.8 L30 42 L21.5 24.8 Z" fill="#4f9abc"/><path d="M21.5 24.6 L30 42.5 L38.5 24.6 L34 21 L26 21 Z" fill="#fbfbfb"/><ellipse cx="30" cy="15.2" rx="9.4" ry="12" fill="#fafafa" stroke="#787878" stroke-width="1.7"/><path d="M20.2 13.5 C19.5 5 25 1.8 30.5 1.8 C36.5 1.8 41 6 39.8 13.2 C39.3 10.8 38.3 9.6 37.2 8.8 C33 11.2 26 11.6 22.8 9.6 C21.3 10.4 20.6 11.8 20.2 13.5 Z" fill="#787878"/></svg><svg style="left:225.8px;top:271.2px" width="26" height="26" viewBox="0 0 26 26"><circle cx="13" cy="13" r="10.9" fill="#fff" stroke="#595959" stroke-width="1.5"/><circle cx="13" cy="13" r="7.7" fill="#3d76b5"/></svg><svg style="left:261.2px;top:280px" width="16" height="16" viewBox="0 0 16 16"><rect x="0.5" y="0.5" width="14.6" height="14.6" fill="#fff" stroke="#8c8c8c" stroke-width="1"/><g transform="translate(7.8 7.9)"><path d="M0 0 L-5.72 -3.3 A6.6 6.6 0 0 1 5.72 -3.3 Z" fill="#db4437"/><path d="M0 0 L5.72 -3.3 A6.6 6.6 0 0 1 0 6.6 Z" fill="#ffcd40"/><path d="M0 0 L0 6.6 A6.6 6.6 0 0 1 -5.72 -3.3 Z" fill="#0f9d58"/><path d="M-5.72 -3.3 A6.6 6.6 0 0 1 5.72 -3.3 L0 -3.3 Z" fill="#db4437"/><circle r="3.4" fill="#fff"/><circle r="2.6" fill="#4285f4"/></g></svg>
<div class="a" style="left:221px;top:296px;width:62.7px;height:14px;background:#fff;border:1px solid #000;box-sizing:border-box;"></div>
<svg style="left:340px;top:245px" width="60" height="50" viewBox="0 0 60 50"><path d="M19.5 25.5 C14 27 9.5 29.5 9 36 L9 43.5 C14 45.6 24 46.2 30 46.2 C36 46.2 47 45.6 52 43.5 L52 36 C51.5 29.5 46 27 40.5 25.5 L38.5 24.8 L30 42 L21.5 24.8 Z" fill="#4f9abc"/><path d="M21.5 24.6 L30 42.5 L38.5 24.6 L34 21 L26 21 Z" fill="#fbfbfb"/><ellipse cx="30" cy="15.2" rx="9.4" ry="12" fill="#fafafa" stroke="#787878" stroke-width="1.7"/><path d="M20.2 13.5 C19.5 5 25 1.8 30.5 1.8 C36.5 1.8 41 6 39.8 13.2 C39.3 10.8 38.3 9.6 37.2 8.8 C33 11.2 26 11.6 22.8 9.6 C21.3 10.4 20.6 11.8 20.2 13.5 Z" fill="#787878"/></svg><svg style="left:343.8px;top:271.2px" width="26" height="26" viewBox="0 0 26 26"><circle cx="13" cy="13" r="10.9" fill="#fff" stroke="#595959" stroke-width="1.5"/><circle cx="13" cy="13" r="7.7" fill="#cf4a30"/></svg>
<div class="a" style="left:336px;top:296px;width:69px;height:14px;background:#fff;border:1px solid #000;box-sizing:border-box;"></div>
<svg style="left:458.3px;top:245px" width="60" height="50" viewBox="0 0 60 50"><path d="M19.5 25.5 C14 27 9.5 29.5 9 36 L9 43.5 C14 45.6 24 46.2 30 46.2 C36 46.2 47 45.6 52 43.5 L52 36 C51.5 29.5 46 27 40.5 25.5 L38.5 24.8 L30 42 L21.5 24.8 Z" fill="#4f9abc"/><path d="M21.5 24.6 L30 42.5 L38.5 24.6 L34 21 L26 21 Z" fill="#fbfbfb"/><ellipse cx="30" cy="15.2" rx="9.4" ry="12" fill="#fafafa" stroke="#787878" stroke-width="1.7"/><path d="M20.2 13.5 C19.5 5 25 1.8 30.5 1.8 C36.5 1.8 41 6 39.8 13.2 C39.3 10.8 38.3 9.6 37.2 8.8 C33 11.2 26 11.6 22.8 9.6 C21.3 10.4 20.6 11.8 20.2 13.5 Z" fill="#787878"/></svg><svg style="left:462.1px;top:271.2px" width="26" height="26" viewBox="0 0 26 26"><circle cx="13" cy="13" r="10.9" fill="#fff" stroke="#595959" stroke-width="1.5"/><circle cx="13" cy="13" r="7.7" fill="#cf4a30"/></svg>
<div class="a" style="left:457.3px;top:296px;width:62.7px;height:14px;background:#fff;border:1px solid #000;box-sizing:border-box;"></div>
<svg style="left:578px;top:244px" width="60" height="50" viewBox="0 0 60 50"><path d="M19.5 25.5 C14 27 9.5 29.5 9 36 L9 43.5 C14 45.6 24 46.2 30 46.2 C36 46.2 47 45.6 52 43.5 L52 36 C51.5 29.5 46 27 40.5 25.5 L38.5 24.8 L30 42 L21.5 24.8 Z" fill="#4f9abc"/><path d="M21.5 24.6 L30 42.5 L38.5 24.6 L34 21 L26 21 Z" fill="#fbfbfb"/><ellipse cx="30" cy="15.2" rx="9.4" ry="12" fill="#fafafa" stroke="#787878" stroke-width="1.7"/><path d="M20.2 13.5 C19.5 5 25 1.8 30.5 1.8 C36.5 1.8 41 6 39.8 13.2 C39.3 10.8 38.3 9.6 37.2 8.8 C33 11.2 26 11.6 22.8 9.6 C21.3 10.4 20.6 11.8 20.2 13.5 Z" fill="#787878"/></svg><svg style="left:581.8px;top:270.2px" width="26" height="26" viewBox="0 0 26 26"><circle cx="13" cy="13" r="10.9" fill="#fff" stroke="#595959" stroke-width="1.5"/><circle cx="13" cy="13" r="7.7" fill="#4fac86"/></svg><svg style="left:619.4px;top:279.5px" width="16" height="16" viewBox="0 0 16 16"><rect x="0.5" y="0.5" width="14.6" height="14.6" fill="#fff" stroke="#8c8c8c" stroke-width="1"/><g transform="translate(7.8 7.9)"><path d="M0 0 L-5.72 -3.3 A6.6 6.6 0 0 1 5.72 -3.3 Z" fill="#db4437"/><path d="M0 0 L5.72 -3.3 A6.6 6.6 0 0 1 0 6.6 Z" fill="#ffcd40"/><path d="M0 0 L0 6.6 A6.6 6.6 0 0 1 -5.72 -3.3 Z" fill="#0f9d58"/><path d="M-5.72 -3.3 A6.6 6.6 0 0 1 5.72 -3.3 L0 -3.3 Z" fill="#db4437"/><circle r="3.4" fill="#fff"/><circle r="2.6" fill="#4285f4"/></g></svg>
<div class="a" style="left:582px;top:295px;width:52.6px;height:14px;background:#fff;border:1px solid #000;box-sizing:border-box;"></div>
<svg style="left:696px;top:244px" width="60" height="50" viewBox="0 0 60 50"><path d="M19.5 25.5 C14 27 9.5 29.5 9 36 L9 43.5 C14 45.6 24 46.2 30 46.2 C36 46.2 47 45.6 52 43.5 L52 36 C51.5 29.5 46 27 40.5 25.5 L38.5 24.8 L30 42 L21.5 24.8 Z" fill="#4f9abc"/><path d="M21.5 24.6 L30 42.5 L38.5 24.6 L34 21 L26 21 Z" fill="#fbfbfb"/><ellipse cx="30" cy="15.2" rx="9.4" ry="12" fill="#fafafa" stroke="#787878" stroke-width="1.7"/><path d="M20.2 13.5 C19.5 5 25 1.8 30.5 1.8 C36.5 1.8 41 6 39.8 13.2 C39.3 10.8 38.3 9.6 37.2 8.8 C33 11.2 26 11.6 22.8 9.6 C21.3 10.4 20.6 11.8 20.2 13.5 Z" fill="#787878"/></svg><svg style="left:699.8px;top:270.2px" width="26" height="26" viewBox="0 0 26 26"><circle cx="13" cy="13" r="10.9" fill="#fff" stroke="#595959" stroke-width="1.5"/><circle cx="13" cy="13" r="7.7" fill="#c1c1c1"/></svg>
<div class="a" style="left:691.2px;top:295px;width:68.8px;height:14px;background:#fff;border:1px solid #000;box-sizing:border-box;"></div>
<svg style="left:814px;top:244px" width="60" height="50" viewBox="0 0 60 50"><path d="M19.5 25.5 C14 27 9.5 29.5 9 36 L9 43.5 C14 45.6 24 46.2 30 46.2 C36 46.2 47 45.6 52 43.5 L52 36 C51.5 29.5 46 27 40.5 25.5 L38.5 24.8 L30 42 L21.5 24.8 Z" fill="#4f9abc"/><path d="M21.5 24.6 L30 42.5 L38.5 24.6 L34 21 L26 21 Z" fill="#fbfbfb"/><ellipse cx="30" cy="15.2" rx="9.4" ry="12" fill="#fafafa" stroke="#787878" stroke-width="1.7"/><path d="M20.2 13.5 C19.5 5 25 1.8 30.5 1.8 C36.5 1.8 41 6 39.8 13.2 C39.3 10.8 38.3 9.6 37.2 8.8 C33 11.2 26 11.6 22.8 9.6 C21.3 10.4 20.6 11.8 20.2 13.5 Z" fill="#787878"/></svg><svg style="left:817.8px;top:270.2px" width="26" height="26" viewBox="0 0 26 26"><circle cx="13" cy="13" r="10.9" fill="#fff" stroke="#595959" stroke-width="1.5"/><circle cx="13" cy="13" r="7.7" fill="#c1c1c1"/></svg>
<div class="a" style="left:818px;top:296px;width:52.6px;height:14px;background:#fff;border:1px solid #000;box-sizing:border-box;"></div>
<div class="a" style="left:78px;top:605px;width:1403px;height:5px;background:#3c76b2;"></div>
<div class="a" style="left:78px;top:605px;width:5px;height:272px;background:#3c76b2;"></div>
<div class="a" style="left:83px;top:610px;width:524px;height:22px;background:#ebb566;"></div>
<div class="a" style="left:83px;top:632px;width:524px;height:206px;background:#ffffc1;"></div>
<div class="a" style="left:607px;top:605px;width:8px;height:231px;background:#3c76b2;"></div>
<div class="a" style="left:607px;top:836px;width:392px;height:2px;background:#ffffc1;"></div>
<div class="a" style="left:612px;top:610px;width:1px;height:226px;background:repeating-linear-gradient(to bottom,#fff 0 4.5px,#2e93fb 4.5px 8px);"></div>
<div class="a" style="left:82px;top:608px;width:1px;height:230px;background:repeating-linear-gradient(to bottom,#2e93fb 0 3.5px,#fff 3.5px 8px);"></div>
<div class="a" style="left:78px;top:612px;width:1px;height:20px;background:#ebb566;"></div>
<div class="a" style="left:78px;top:632px;width:1px;height:206px;background:#ffffc1;"></div>
<div class="a" style="left:78px;top:600px;width:1px;height:8px;background:#f7f9fc;"></div>
<div class="a" style="left:77px;top:735px;width:1px;height:142px;background:#ffffff;"></div>
<div class="a" style="left:78px;top:838px;width:1px;height:39px;background:#ffffff;"></div>
<div class="a" style="left:615px;top:610px;width:866px;height:22px;background:#ebb566;"></div>
<div class="a" style="left:615px;top:632px;width:866px;height:206px;background:#ffffff;"></div>
<div class="a" style="left:607px;top:836px;width:392px;height:1px;background:#ffffc1;"></div>
<div class="a" style="left:80px;top:838px;width:1401px;height:2px;background:#3c76b2;"></div>
<div class="a" style="left:82px;top:837px;width:916px;height:1px;background:repeating-linear-gradient(to right,#2e93fb 0 4px,#fff 4px 8px);"></div>
<div class="a" style="left:1002px;top:836px;width:5px;height:4px;box-sizing:border-box;border:1px solid #444;border-top:none;"></div>
<div class="a" style="left:83px;top:840px;width:1398px;height:36px;background:#ffffff;"></div>
<div class="a" style="left:80px;top:876px;width:1401px;height:1px;background:#3c76b2;"></div>
<div class="a" style="left:80px;top:719px;width:5px;height:5px;background:#fff;border:1px solid #444;box-sizing:border-box;"></div>
<div class="a" style="left:80px;top:835px;width:5px;height:5px;background:#fff;border:1px solid #444;box-sizing:border-box;"></div>
<div class="a" style="left:541.5px;top:835px;width:5px;height:5px;background:#fff;border:1px solid #444;box-sizing:border-box;"></div>
<div class="a" style="left:610px;top:719px;width:5px;height:5px;background:#fff;border:1px solid #444;box-sizing:border-box;"></div>
<svg style="left:86px;top:613px" width="17" height="17" viewBox="0 0 17 17"><circle cx="7.9" cy="8.1" r="7.9" fill="#fff"/></svg>
<svg style="left:581px;top:614px" width="14" height="14" viewBox="0 0 14 14"><path d="M5 0h4v5h5v4h-5v5h-4v-5h-5v-4h5z" fill="#f1cb93"/></svg>
<svg style="left:619px;top:614px" width="14" height="14" viewBox="0 0 14 14"><rect x="0" y="0" width="8" height="3.6" fill="#fff"/><rect x="0" y="5" width="14" height="3.8" fill="#fff"/><rect x="0" y="10.2" width="11" height="3.6" fill="#fff"/></svg>
<svg style="left:0;top:0" width="1481" height="640" viewBox="0 0 1481 640"><path d="M1435.1 614.4 Q1435.1 613.1 1436.4 613.1 H1448 V626.6 H1436.6 Q1435.6 626.8 1435.6 627.8 Q1435.6 628.6 1436.6 628.6 H1447.4 V629 H1436.4 Q1435.1 629 1435.1 627.7Z" fill="#3c76b2"/><rect x="1436" y="626.9" width="11.4" height="1.3" fill="#fff"/><path d="M1447.4 626.6 H1448 V629 H1447.4Z" fill="#3c76b2"/><rect x="1437" y="613.1" width="1" height="13.6" fill="#dfe8f4"/><rect x="1440.1" y="615" width="5.9" height="2.9" fill="#e3ebf5"/><path d="M1463.9 616.1 L1469.5 621.6 L1475.1 616.1 V620.6 L1469.5 626.3 L1463.9 620.6Z" fill="#fff"/></svg>
<div class="a" style="left:94px;top:660px;width:503px;height:126px;box-sizing:border-box;border:1px solid #c0c0c8;background:#ffffc1;box-shadow:inset 0 0 0 1px #fdfdf0;"></div>
<div class="a" style="left:579px;top:662px;width:16px;height:122px;background:#f0f0f0;"></div>
<svg style="left:579px;top:662px" width="16" height="122" viewBox="0 0 16 122"><path d="M4 10.5 L8 6.5 L12 10.5" fill="none" stroke="#b4b4b4" stroke-width="1.6"/><path d="M4 111.5 L8 115.5 L12 111.5" fill="none" stroke="#b4b4b4" stroke-width="1.6"/></svg>
<div class="a" style="left:94px;top:807.4px;width:503px;height:20.3px;box-sizing:border-box;border:1px solid #c0c0c8;background:#fff;"></div>
<div class="a" style="left:97px;top:810px;width:480px;height:15px;background:#ffffc1;"></div>
<svg style="left:582.5px;top:814px" width="11" height="8" viewBox="0 0 11 8"><path d="M1.2 1.5 L5.5 5.8 L9.8 1.5" fill="none" stroke="#8a8a8a" stroke-width="1"/></svg>
<div class="a" style="left:919px;top:632px;width:1px;height:24px;background:#e2e2e2;"></div>
<div class="a" style="left:920px;top:656.3px;width:561px;height:18.5px;box-sizing:border-box;border-top:1px solid #4575b4;border-bottom:1px solid #4575b4;background:#fff;"></div>
<div class="a" style="left:920px;top:656.3px;width:242.8px;height:18.5px;background:#4575b4;"></div>
<svg style="left:615.4px;top:656.3px" width="17" height="17" viewBox="0 0 17 17"><circle cx="8.5" cy="8.5" r="7.3" fill="#fff" stroke="#4a4a4a" stroke-width="1"/><circle cx="8.5" cy="8.5" r="5.3" fill="#3d76b5"/></svg>
<div class="a" style="left:920px;top:674.8px;width:561px;height:19.1px;box-sizing:border-box;border-top:1px solid #5bab84;border-bottom:1px solid #5bab84;background:#fff;"></div>
<div class="a" style="left:920px;top:674.8px;width:204px;height:19.1px;background:#5bab84;"></div>
<svg style="left:615.4px;top:675.3px" width="17" height="17" viewBox="0 0 17 17"><circle cx="8.5" cy="8.5" r="7.3" fill="#fff" stroke="#4a4a4a" stroke-width="1"/><circle cx="8.5" cy="8.5" r="5.3" fill="#4fac86"/></svg>
<div class="a" style="left:920px;top:693.9px;width:561px;height:18.3px;box-sizing:border-box;border-top:1px solid #c0c0c0;border-bottom:1px solid #c0c0c0;background:#fff;"></div>
<div class="a" style="left:920px;top:693.9px;width:242.8px;height:18.3px;background:#c0c0c0;"></div>
<svg style="left:615.4px;top:694.3px" width="17" height="17" viewBox="0 0 17 17"><circle cx="8.5" cy="8.5" r="7.3" fill="#fff" stroke="#4a4a4a" stroke-width="1"/><circle cx="8.5" cy="8.5" r="5.3" fill="#c1c1c1"/></svg>
<div class="a" style="left:920px;top:712.2px;width:561px;height:18.8px;box-sizing:border-box;border-top:1px solid #c44a2f;border-bottom:1px solid #c44a2f;background:#fff;"></div>
<div class="a" style="left:920px;top:712.2px;width:178px;height:18.8px;background:#c44a2f;"></div>
<svg style="left:615.4px;top:713.3px" width="17" height="17" viewBox="0 0 17 17"><circle cx="8.5" cy="8.5" r="7.3" fill="#fff" stroke="#4a4a4a" stroke-width="1"/><circle cx="8.5" cy="8.5" r="5.3" fill="#cf4a30"/></svg>
<svg style="left:0;top:0" width="130" height="880" viewBox="0 0 130 880"><ellipse cx="102.05" cy="857.9" rx="11.95" ry="11.2" fill="#3c76b2"/><path d="M93.2 862.6 L90 868.9 L97.6 866.8Z" fill="#3c76b2"/></svg>
<svg style="left:174px;top:854px" width="11" height="6" viewBox="0 0 11 6"><path d="M0 5.6 L5.3 0 L10.6 5.6Z" fill="#3c76b2"/></svg>
<svg style="left:203px;top:848px" width="20" height="20" viewBox="0 0 20 20"><path d="M7.1 0.1h5.9v7h7v5.8h-7v7h-5.9v-7h-7.1v-5.8h7.1z" fill="#b8b8b8"/></svg>
<svg style="left:277px;top:846px" width="25" height="25" viewBox="0 0 25 25"><path d="M0 22.6 V19 C0.3 15.4 3.6 14.2 7.4 13 L12 21.6 L16.6 13 C20.4 14.2 23.8 15.4 24.1 19 V22.6 C18 24.2 6 24.2 0 22.6Z" fill="#bdbdbd"/><ellipse cx="12" cy="6.8" rx="5.3" ry="6.1" fill="#fbfbfb" stroke="#bdbdbd" stroke-width="1.3"/><path d="M6.4 6.4 C5.8 1.6 9 0 12.2 0 C15.6 0 18.4 2.2 17.7 6.2 C17.1 4.3 16.1 3.7 15.5 3.5 C13 4.8 9.8 4.9 8 3.9 C7 4.5 6.6 5.4 6.4 6.4Z" fill="#bdbdbd"/></svg>
<svg style="left:356px;top:848px" width="21" height="20" viewBox="0 0 21 20"><path d="M2 2 L19 18 M19 2 L2 18" stroke="#c8482f" stroke-width="4.4" fill="none"/></svg>
<svg style="left:0;top:0" width="600" height="880" viewBox="0 0 600 880"><path d="M456 857.9 L456.00 845.90 A12 12 0 1 1 452.09 869.25 Z" fill="#3c76b2"/><path d="M456 857.9 L452.09 869.25 A12 12 0 0 1 446.29 850.85 Z" fill="#c9482f"/><path d="M456 857.9 L446.29 850.85 A12 12 0 0 1 456.00 845.90 Z" fill="#ebb566"/></svg>
<svg style="left:504px;top:848px" width="18" height="18" viewBox="0 0 18 18"><circle cx="9" cy="9" r="7.3" fill="#fff" stroke="#484848" stroke-width="1.4"/><circle cx="9" cy="9" r="5.1" fill="#dcdcdc"/></svg>
<svg style="left:544px;top:847px" width="22" height="22" viewBox="0 0 22 22"><path d="M0 0 H22 V22 H3 L0 19Z" fill="#8c4fa8"/><rect x="3.6" y="1.6" width="14.6" height="10" fill="#fdfdfd"/><rect x="5.4" y="4" width="11" height="1" fill="#cfcfcf"/><rect x="5.4" y="6.3" width="11" height="1" fill="#cfcfcf"/><rect x="5.4" y="8.6" width="11" height="1" fill="#cfcfcf"/><rect x="5" y="15.5" width="12.5" height="6.5" fill="#fdfdfd"/><rect x="8" y="16.8" width="3.6" height="5.2" fill="#8c4fa8"/></svg>
<svg style="left:626px;top:846px" width="25" height="24" viewBox="0 0 25 24"><rect x="6.5" y="0.6" width="11.5" height="7" fill="#fff" stroke="#707070" stroke-width="1"/><rect x="0.1" y="6" width="23.9" height="12" rx="1.6" fill="#737373"/><rect x="3.5" y="4.4" width="17" height="6.6" fill="#fff"/><rect x="4" y="4.9" width="16" height="5.6" fill="#3c76b2"/><rect x="6.5" y="16.3" width="11.5" height="7.2" fill="#fff" stroke="#707070" stroke-width="1"/><rect x="9" y="18.8" width="6.2" height="0.9" fill="#8fb1d8"/><rect x="9" y="20.4" width="6.2" height="0.9" fill="#8fb1d8"/><rect x="2" y="15" width="2" height="1.3" fill="#fff"/></svg>
<div class="a" style="left:1614px;top:114px;width:483px;height:620px;box-sizing:border-box;border:1px solid #8e8e8e;background:#ebebeb;"></div>
<div class="a" style="left:1616px;top:143px;width:474px;height:584px;box-sizing:border-box;border:1px solid #e3e3e3;background:linear-gradient(to bottom,#edf0f9 0%,#e4e7f0 50%,#d9dce5 100%);"></div>
<svg style="left:0;top:0" width="2202" height="880" viewBox="0 0 2202 880"><circle cx="1855.1" cy="410.4" r="177.7" fill="#c3c6d0" opacity="0.75"/><circle cx="1853.5" cy="408.6" r="177.6" fill="#f6f7fa"/><path d="M1853.5 408.6 L2030.00 408.60 A176.5 176.5 0 0 1 1710.71 512.34 Z" fill="#4575b4" stroke="#f6f7fa" stroke-width="1.2" stroke-linejoin="round"/><path d="M1853.5 408.6 L1710.71 512.34 A176.5 176.5 0 0 1 1710.71 304.86 Z" fill="#5bab84" stroke="#f6f7fa" stroke-width="1.2" stroke-linejoin="round"/><path d="M1853.5 408.6 L1710.71 304.86 A176.5 176.5 0 0 1 2030.00 408.60 Z" fill="#c0c0c0" stroke="#f6f7fa" stroke-width="1.2" stroke-linejoin="round"/></svg>
<div class="a" style="left:1637px;top:631px;width:17px;height:17px;box-sizing:border-box;border:1px solid #f4f4f4;background:#4575b4;"></div>
<div class="a" style="left:1637px;top:651px;width:17px;height:17px;box-sizing:border-box;border:1px solid #f4f4f4;background:#5bab84;"></div>
<div class="a" style="left:1637px;top:671px;width:17px;height:17px;box-sizing:border-box;border:1px solid #f4f4f4;background:#c0c0c0;"></div>
<div class="a" style="left:1637px;top:691px;width:17px;height:17px;box-sizing:border-box;border:1px solid #f4f4f4;background:#c44a2f;"></div>
<span class="t" style="left:20.50px;top:1.00px;font-size:12px;line-height:16px;color:#000;transform:scaleX(0.9785);">NetSupport School : MR SMITH</span>
<span class="t" style="left:4.50px;top:22.00px;font-size:12px;line-height:16px;color:#000;transform:scaleX(1.0054);">School</span>
<span class="t" style="left:54.00px;top:22.00px;font-size:12px;line-height:16px;color:#000;transform:scaleX(1.0272);">Student</span>
<span class="t" style="left:110.00px;top:22.00px;font-size:12px;line-height:16px;color:#000;transform:scaleX(0.9862);">Group</span>
<span class="t" style="left:156.80px;top:22.00px;font-size:12px;line-height:16px;color:#000;transform:scaleX(0.9924);">View</span>
<span class="t" style="left:195.70px;top:22.00px;font-size:12px;line-height:16px;color:#000;transform:scaleX(0.9583);">Survey</span>
<span class="t" style="left:244.70px;top:22.00px;font-size:12px;line-height:16px;color:#000;transform:scaleX(1.0213);">Layout</span>
<span class="t" style="left:294.50px;top:22.00px;font-size:12px;line-height:16px;color:#000;transform:scaleX(0.9934);">Planner</span>
<span class="t" style="left:348.30px;top:22.00px;font-size:12px;line-height:16px;color:#000;transform:scaleX(0.9960);">Journal</span>
<span class="t" style="left:400.70px;top:22.00px;font-size:12px;line-height:16px;color:#000;transform:scaleX(1.0448);">Window</span>
<span class="t" style="left:458.60px;top:22.00px;font-size:12px;line-height:16px;color:#000;transform:scaleX(1.0329);">Help</span>
<span class="t" style="left:3.60px;top:73.00px;font-size:12px;line-height:16px;color:#000;transform:scaleX(0.9660);">Manage</span>
<span class="t" style="left:11.40px;top:88.00px;font-size:12px;line-height:16px;color:#000;transform:scaleX(0.8862);">Class</span>
<span class="t" style="left:58.10px;top:73.00px;font-size:12px;line-height:16px;color:#000;transform:scaleX(0.8792);">Basic</span>
<span class="t" style="left:55.70px;top:88.00px;font-size:12px;line-height:16px;color:#000;transform:scaleX(1.0189);">Mode</span>
<span class="t" style="left:97.50px;top:73.00px;font-size:12px;line-height:16px;color:#000;transform:scaleX(0.9668);">Student</span>
<span class="t" style="left:96.50px;top:88.00px;font-size:12px;line-height:16px;color:#000;transform:scaleX(0.9622);">Register</span>
<span class="t" style="left:148.70px;top:73.00px;font-size:12px;line-height:16px;color:#000;transform:scaleX(0.9524);">Random</span>
<span class="t" style="left:150.70px;top:88.00px;font-size:12px;line-height:16px;color:#000;transform:scaleX(0.9619);">Student</span>
<span class="t" style="left:230.50px;top:73.00px;font-size:12px;line-height:16px;color:#000;transform:scaleX(0.9324);">Journal</span>
<span class="t" style="left:310.50px;top:73.00px;font-size:12px;line-height:16px;color:#000;transform:scaleX(0.9290);">Show</span>
<span class="t" style="left:310.50px;top:88.00px;font-size:12px;line-height:16px;color:#000;transform:scaleX(0.9723);">Menu</span>
<span class="t" style="left:357.10px;top:73.00px;font-size:12px;line-height:16px;color:#000;transform:scaleX(0.9924);">View</span>
<span class="t" style="left:354.40px;top:88.00px;font-size:12px;line-height:16px;color:#000;transform:scaleX(0.9874);">Client</span>
<span class="t" style="left:430.40px;top:73.00px;font-size:12px;line-height:16px;color:#000;transform:scaleX(0.9305);">File</span>
<span class="t" style="left:419.10px;top:88.00px;font-size:12px;line-height:16px;color:#000;transform:scaleX(0.9156);">Transfer</span>
<span class="t" style="left:469.50px;top:73.00px;font-size:12px;line-height:16px;color:#000;transform:scaleX(0.9552);">Send/Collect</span>
<span class="t" style="left:488.90px;top:88.00px;font-size:12px;line-height:16px;color:#000;transform:scaleX(0.9683);">Work</span>
<span class="t" style="left:570.70px;top:73.00px;font-size:12px;line-height:16px;color:#000;transform:scaleX(0.9267);">Lock</span>
<span class="t" style="left:605.80px;top:73.00px;font-size:12px;line-height:16px;color:#a9a9a9;transform:scaleX(0.9731);">Unlock</span>
<span class="t" style="left:651.70px;top:73.00px;font-size:12px;line-height:16px;color:#000;transform:scaleX(0.9091);">Blank</span>
<span class="t" style="left:659.50px;top:88.00px;font-size:12px;line-height:16px;color:#000;transform:scaleX(1.0267);">All</span>
<span class="t" style="left:723.10px;top:73.00px;font-size:12px;line-height:16px;color:#000;transform:scaleX(0.9768);">Web</span>
<span class="t" style="left:717.70px;top:88.00px;font-size:12px;line-height:16px;color:#000;transform:scaleX(0.8711);">Access</span>
<span class="t" style="left:764.90px;top:73.00px;font-size:12px;line-height:16px;color:#a9a9a9;transform:scaleX(0.9232);">Co-Browse</span>
<span class="t" style="left:831.40px;top:73.00px;font-size:12px;line-height:16px;color:#000;transform:scaleX(0.9683);">Manage</span>
<span class="t" style="left:909.50px;top:73.00px;font-size:12px;line-height:16px;color:#000;transform:scaleX(0.9550);">Communicate</span>
<span class="t" style="left:1001.00px;top:73.00px;font-size:12px;line-height:16px;color:#000;transform:scaleX(0.9519);">Help</span>
<span class="t" style="left:989.40px;top:88.00px;font-size:12px;line-height:16px;color:#000;transform:scaleX(0.9230);">Requests</span>
<span class="t" style="left:1045.70px;top:73.00px;font-size:12px;line-height:16px;color:#000;transform:scaleX(0.9644);">Student</span>
<span class="t" style="left:1045.70px;top:88.00px;font-size:12px;line-height:16px;color:#000;transform:scaleX(1.0137);">Toolbar</span>
<span class="t" style="left:1120.90px;top:73.00px;font-size:12px;line-height:16px;color:#000;transform:scaleX(0.9909);">Student</span>
<span class="t" style="left:1119.80px;top:88.00px;font-size:12px;line-height:16px;color:#000;transform:scaleX(0.9811);">Desktop</span>
<span class="t" style="left:1178.30px;top:73.00px;font-size:12px;line-height:16px;color:#000;transform:scaleX(0.9450);">Quick</span>
<span class="t" style="left:1175.40px;top:88.00px;font-size:12px;line-height:16px;color:#000;transform:scaleX(0.9016);">Launch</span>
<span class="t" style="left:1247.00px;top:73.00px;font-size:12px;line-height:16px;color:#000;transform:scaleX(0.8955);">Assessments</span>
<span class="t" style="left:1323.70px;top:73.00px;font-size:12px;line-height:16px;color:#000;transform:scaleX(0.9069);">Lesson</span>
<span class="t" style="left:1328.00px;top:88.00px;font-size:12px;line-height:16px;color:#000;transform:scaleX(0.8791);">Plans</span>
<span class="t" style="left:1403.20px;top:73.00px;font-size:12px;line-height:16px;color:#000;">Tutor</span>
<span class="t" style="left:1394.50px;top:88.00px;font-size:12px;line-height:16px;color:#000;transform:scaleX(0.9386);">Assistant</span>
<span class="t" style="left:103.20px;top:118.00px;font-size:10.6px;line-height:14px;color:#000;">All : 14</span>
<span class="t" style="left:171.50px;top:118.00px;font-size:10.6px;line-height:14px;color:#000;transform:scaleX(0.9941);">Table 1 : 5</span>
<span class="t" style="left:261.40px;top:118.00px;font-size:10.6px;line-height:14px;color:#000;">Table 2 : 5</span>
<span class="t" style="left:351.40px;top:118.00px;font-size:10.6px;line-height:14px;color:#000;transform:scaleX(1.0125);">Table 3 : 4</span>
<span class="t" style="left:109.20px;top:194.00px;font-size:9.4px;line-height:12px;color:#000;transform:scaleX(1.0204);">Darren Ward</span>
<span class="t" style="left:232.70px;top:194.00px;font-size:9.4px;line-height:12px;color:#000;transform:scaleX(1.0138);">Jane Neal</span>
<span class="t" style="left:336.40px;top:194.00px;font-size:9.4px;line-height:12px;color:#000;transform:scaleX(1.0622);">Katie Hammond</span>
<span class="t" style="left:466.95px;top:194.00px;font-size:9.4px;line-height:12px;color:#000;transform:scaleX(1.0196);">Lisa Brown</span>
<span class="t" style="left:582.80px;top:194.00px;font-size:9.4px;line-height:12px;color:#000;transform:scaleX(1.0314);">Ajay Pathak</span>
<span class="t" style="left:703.10px;top:194.00px;font-size:9.4px;line-height:12px;color:#000;transform:scaleX(1.0131);">Lisa Brown</span>
<span class="t" style="left:824.75px;top:193.00px;font-size:9.4px;line-height:12px;color:#000;transform:scaleX(0.9889);">Liz Bury</span>
<span class="t" style="left:112.15px;top:297.00px;font-size:9.4px;line-height:12px;color:#000;transform:scaleX(0.9834);">Matt Jones</span>
<span class="t" style="left:225.90px;top:297.00px;font-size:9.4px;line-height:12px;color:#000;transform:scaleX(1.0319);">Adam Wallis</span>
<span class="t" style="left:340.50px;top:297.00px;font-size:9.4px;line-height:12px;color:#000;">Chris Lovesey</span>
<span class="t" style="left:462.00px;top:297.00px;font-size:9.4px;line-height:12px;color:#000;transform:scaleX(1.0710);">Tom Murray</span>
<span class="t" style="left:585.65px;top:296.00px;font-size:9.4px;line-height:12px;color:#000;transform:scaleX(1.0210);">Andy Earp</span>
<span class="t" style="left:701.40px;top:296.00px;font-size:9.4px;line-height:12px;color:#000;transform:scaleX(1.0088);">Al Kingsley</span>
<span class="t" style="left:820.05px;top:297.00px;font-size:9.4px;line-height:12px;color:#000;transform:scaleX(0.9731);">Dan Woods</span>
<span class="t" style="left:89.97px;top:612.00px;font-size:14.5px;line-height:19px;color:#ebb566;font-weight:bold;">?</span>
<span class="t" style="left:105.50px;top:614.00px;font-size:11.7px;line-height:15px;color:#fff;font-weight:bold;transform:scaleX(1.0261);">Survey</span>
<span class="t" style="left:637.10px;top:614.00px;font-size:11.7px;line-height:15px;color:#fff;font-weight:bold;transform:scaleX(0.9852);">Survey Results</span>
<span class="t" style="left:93.40px;top:643.00px;font-size:11.3px;line-height:15px;color:#000;transform:scaleX(0.9450);">Question:</span>
<span class="t" style="left:97.30px;top:663.00px;font-size:11.3px;line-height:15px;color:#6d6d6d;transform:scaleX(0.9469);">In Keats' 'Ode to a Nightingale', what type of diction has been used?</span>
<span class="t" style="left:93.90px;top:791.00px;font-size:11.3px;line-height:15px;color:#000;transform:scaleX(0.9479);">Response:</span>
<span class="t" style="left:97.30px;top:810.00px;font-size:11.3px;line-height:15px;color:#6d6d6d;transform:scaleX(0.9207);">Formal,Informal,Neutral,Assonance</span>
<span class="t" style="left:620.80px;top:636.00px;font-size:12px;line-height:16px;color:#000;transform:scaleX(0.9921);">Answer</span>
<span class="t" style="left:925.50px;top:636.00px;font-size:12px;line-height:16px;color:#000;transform:scaleX(0.9773);">Percentage</span>
<span class="t" style="left:632.90px;top:658.00px;font-size:12px;line-height:16px;color:#000;transform:scaleX(1.0042);">Formal</span>
<span class="t" style="left:1226.70px;top:658.00px;font-size:12px;line-height:16px;color:#000;font-weight:bold;transform:scaleX(1.0990);">30.8%</span>
<span class="t" style="left:632.90px;top:677.00px;font-size:12px;line-height:16px;color:#000;transform:scaleX(1.0448);">Informal</span>
<span class="t" style="left:1228.00px;top:677.00px;font-size:12px;line-height:16px;color:#000;font-weight:bold;transform:scaleX(1.0990);">23.0%</span>
<span class="t" style="left:632.90px;top:696.00px;font-size:12px;line-height:16px;color:#000;transform:scaleX(1.0210);">Neutral</span>
<span class="t" style="left:1226.70px;top:696.00px;font-size:12px;line-height:16px;color:#000;font-weight:bold;transform:scaleX(1.0990);">30.8%</span>
<span class="t" style="left:632.90px;top:715.00px;font-size:12px;line-height:16px;color:#000;transform:scaleX(0.9684);">Assonance</span>
<span class="t" style="left:1228.00px;top:714.00px;font-size:12px;line-height:16px;color:#000;font-weight:bold;transform:scaleX(1.0990);">15.4%</span>
<span class="t" style="left:919.50px;top:753.00px;font-size:12px;line-height:16px;color:#000;transform:scaleX(0.9948);">Waiting for 1 response</span>
<span class="t" style="left:119.70px;top:850.00px;font-size:12px;line-height:16px;color:#000;transform:scaleX(1.0056);">Question</span>
<span class="t" style="left:231.10px;top:850.00px;font-size:12px;line-height:16px;color:#8f8f8f;transform:scaleX(1.0253);">Add</span>
<span class="t" style="left:307.00px;top:850.00px;font-size:12px;line-height:16px;color:#8f8f8f;transform:scaleX(0.9454);">Send</span>
<span class="t" style="left:383.50px;top:850.00px;font-size:12px;line-height:16px;color:#000;transform:scaleX(0.9609);">Cancel</span>
<span class="t" style="left:473.50px;top:850.00px;font-size:12px;line-height:16px;color:#000;transform:scaleX(0.9790);">Show</span>
<span class="t" style="left:572.80px;top:850.00px;font-size:12px;line-height:16px;color:#000;transform:scaleX(0.8887);">Save...</span>
<span class="t" style="left:655.90px;top:850.00px;font-size:12px;line-height:16px;color:#000;transform:scaleX(0.9859);">Print...</span>
<span class="t" style="left:95.57px;top:844.00px;font-size:22px;line-height:29px;color:#fff;font-weight:bold;transform:scaleX(.76);transform-origin:50% 50%;">?</span>
<span class="t" style="left:1805.60px;top:120.00px;font-size:14px;line-height:18px;color:#333;">Survey Results</span>
<span class="t" style="left:1636.50px;top:156.00px;font-size:16px;line-height:21px;color:#000;font-weight:bold;transform:scaleX(0.9289);">In Keats' 'Ode to a Nightingale', what type of diction has been</span>
<span class="t" style="left:1832.75px;top:175.00px;font-size:16px;line-height:21px;color:#000;font-weight:bold;transform:scaleX(0.8600);">used?</span>
<span class="t" style="left:1867.10px;top:296.00px;font-size:11px;line-height:14px;color:#fff;transform:scaleX(1.0432);text-shadow:1px 1px 0 rgba(70,70,80,.5);">Neutral</span>
<span class="t" style="left:1720.95px;top:401.00px;font-size:11px;line-height:14px;color:#fff;transform:scaleX(1.0692);text-shadow:1px 1px 0 rgba(70,70,80,.5);">Informal</span>
<span class="t" style="left:1868.10px;top:505.00px;font-size:11px;line-height:14px;color:#fff;transform:scaleX(1.0224);text-shadow:1px 1px 0 rgba(70,70,80,.5);">Formal</span>
<span class="t" style="left:1685.60px;top:631.00px;font-size:11px;line-height:14px;color:#111;transform:scaleX(0.9486);">40.0%</span>
<span class="t" style="left:1685.60px;top:651.00px;font-size:11px;line-height:14px;color:#111;transform:scaleX(0.9486);">20.0%</span>
<span class="t" style="left:1685.60px;top:671.00px;font-size:11px;line-height:14px;color:#111;transform:scaleX(0.9486);">40.0%</span>
<span class="t" style="left:1691.70px;top:691.00px;font-size:11px;line-height:14px;color:#111;transform:scaleX(0.9371);">0.0%</span>
</body></html>
